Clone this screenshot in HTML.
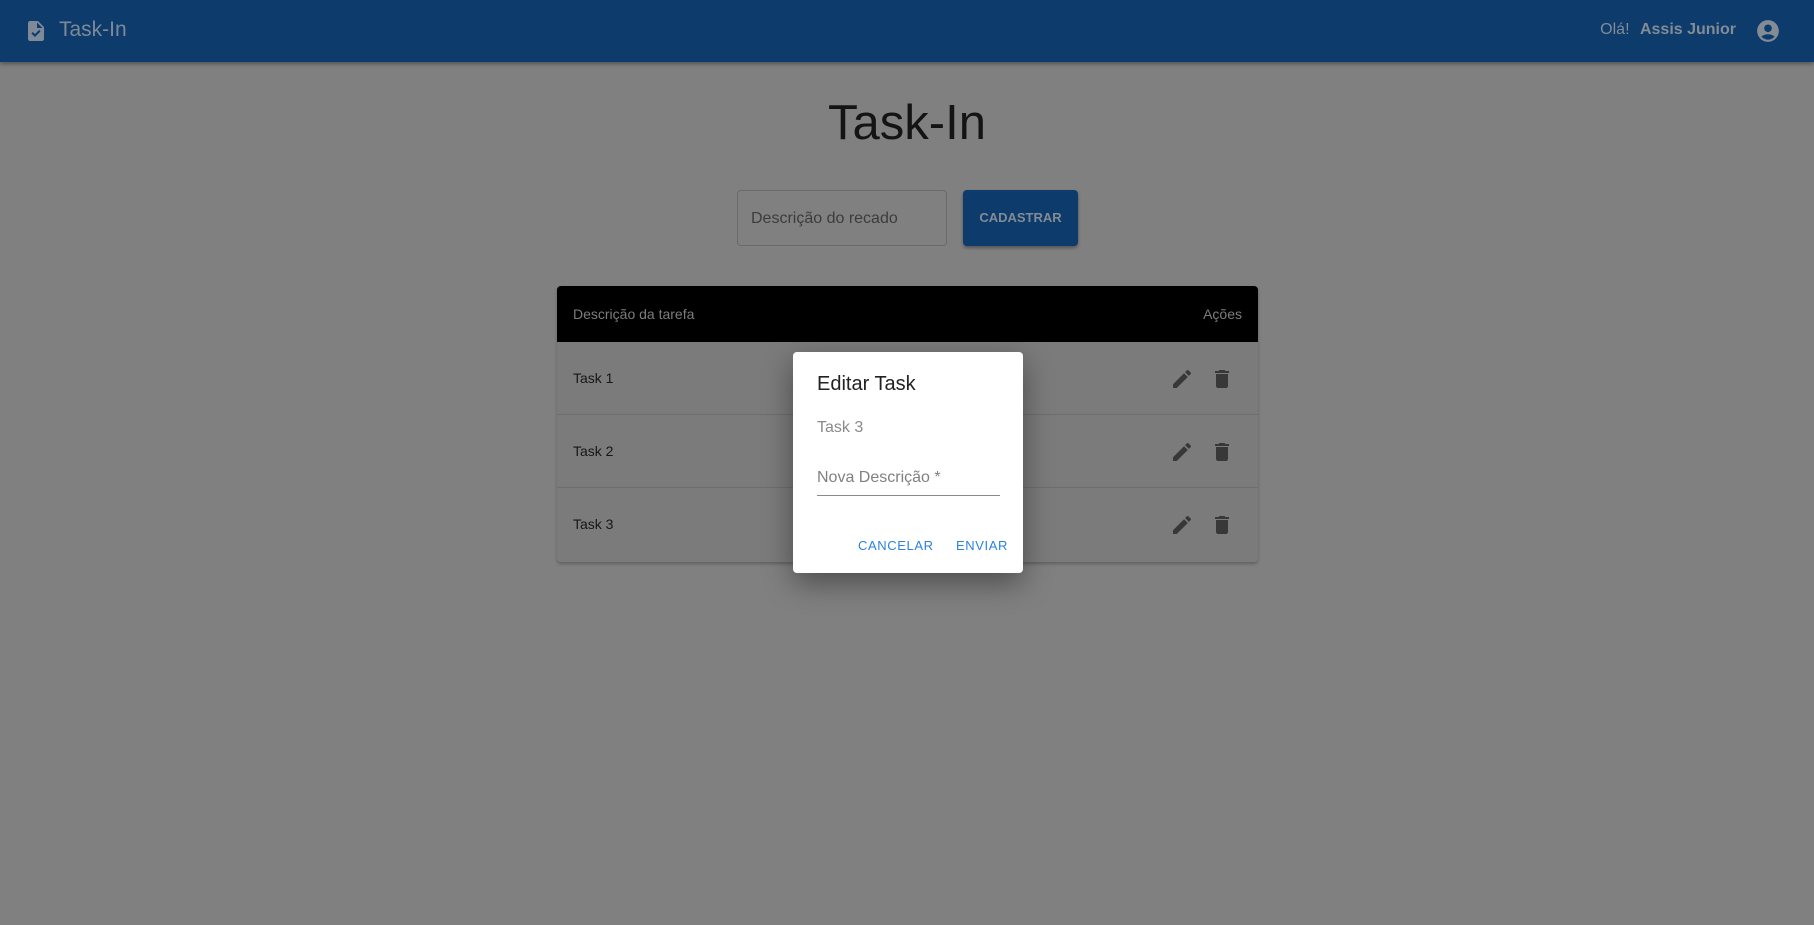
<!DOCTYPE html>
<html><head><meta charset="utf-8"><style>
*{box-sizing:border-box;margin:0;padding:0}
body{width:1814px;height:925px;background:#808080;font-family:"Liberation Sans",sans-serif;position:relative;overflow:hidden}
.bar{position:absolute;left:0;top:0;width:1814px;height:62px;background:#0c3b6c;box-shadow:0 2px 4px rgba(0,0,0,.35)}
.bar .t{position:absolute;left:59px;top:18px;font-size:21px;color:#7e8a97}
.bar .r{position:absolute;right:78px;top:21px;font-size:16px;color:#838b95}
.bar .r b{margin-left:6px}
h1{position:absolute;left:0;width:1814px;top:95px;text-align:center;font-weight:400;font-size:49px;color:#141414}
.inp{position:absolute;left:737px;top:190px;width:210px;height:56px;border:1px solid #6a6a6a;border-radius:4px;font-size:16px;color:#3c3c3c;padding:19px 0 0 13px}
.btn{position:absolute;left:963px;top:190px;width:115px;height:56px;background:#0c3b6c;border-radius:4px;color:#838b95;font-size:13px;font-weight:bold;text-align:center;line-height:56px;box-shadow:0 2px 3px rgba(0,0,0,.35)}
.tbl{position:absolute;left:557px;top:286px;width:701px;height:276px;background:#7b7b7b;border-radius:4px;box-shadow:0 2px 3px rgba(0,0,0,.25);overflow:hidden}
.th{height:56px;background:#000;color:#7c7c7c;font-size:14px;padding:20px 16px;display:flex;justify-content:space-between}
.row{height:73px;border-bottom:1px solid #6e6e6e;font-size:14px;color:#161616;padding:28px 16px;position:relative}
.row:last-child{border:none}
.ic{position:absolute;top:25px}
.dlg{position:absolute;left:793px;top:352px;width:230px;height:221px;background:#fff;border-radius:4px;box-shadow:0 10px 30px rgba(0,0,0,.4)}
.dlg .h{position:absolute;left:24px;top:21px;font-size:20px;color:#222}
.dlg .s{position:absolute;left:24px;top:67px;font-size:16px;color:#8a8a8a}
.dlg .f{position:absolute;left:24px;top:117px;width:183px;height:27px;border-bottom:1px solid #8a8a8a;font-size:16px;color:#808080}
.dlg .a{position:absolute;top:186px;font-size:13px;color:#2b82e0;letter-spacing:.6px}
</style></head><body>
<div class="bar">
<svg style="position:absolute;left:24px;top:19px" width="24" height="24" viewBox="0 0 24 24"><path fill="#7e8a97" d="M14 2H6c-1.1 0-2 .9-2 2v16c0 1.1.9 2 2 2h12c1.1 0 2-.9 2-2V8l-6-6zm-3.06 16L7.4 14.46l1.41-1.41 2.12 2.12 4.24-4.24 1.41 1.41L10.94 18zM13 9V3.5L18.5 9H13z"/></svg>
<div class="t">Task-In</div>
<div class="r">Olá! <b>Assis Junior</b></div>
<svg style="position:absolute;left:1755px;top:18px" width="26" height="26" viewBox="0 0 24 24"><path fill="#838b95" d="M12 2C6.48 2 2 6.48 2 12s4.48 10 10 10 10-4.48 10-10S17.52 2 12 2zm0 4c1.93 0 3.5 1.57 3.5 3.5S13.93 13 12 13s-3.5-1.57-3.5-3.5S10.07 6 12 6zm0 14c-2.03 0-4.43-.82-6.14-2.88C7.55 15.8 9.68 15 12 15s4.45.8 6.14 2.12C16.43 19.18 14.03 20 12 20z"/></svg>
</div>
<h1>Task-In</h1>
<div class="inp">Descrição do recado</div>
<div class="btn">CADASTRAR</div>
<div class="tbl">
<div class="th"><span>Descrição da tarefa</span><span>Ações</span></div>
<div class="row">Task 1
<svg class="ic" style="left:613px" width="24" height="24" viewBox="0 0 24 24"><path fill="#383838" d="M3 17.25V21h3.75L17.81 9.94l-3.75-3.75L3 17.25zM20.71 7.04a1 1 0 000-1.41l-2.34-2.34a1 1 0 00-1.41 0l-1.83 1.83 3.75 3.75 1.83-1.83z"/></svg>
<svg class="ic" style="left:653px" width="24" height="24" viewBox="0 0 24 24"><path fill="#383838" d="M6 19c0 1.1.9 2 2 2h8c1.1 0 2-.9 2-2V7H6v12zM19 4h-3.5l-1-1h-5l-1 1H5v2h14V4z"/></svg></div>
<div class="row">Task 2
<svg class="ic" style="left:613px" width="24" height="24" viewBox="0 0 24 24"><path fill="#383838" d="M3 17.25V21h3.75L17.81 9.94l-3.75-3.75L3 17.25zM20.71 7.04a1 1 0 000-1.41l-2.34-2.34a1 1 0 00-1.41 0l-1.83 1.83 3.75 3.75 1.83-1.83z"/></svg>
<svg class="ic" style="left:653px" width="24" height="24" viewBox="0 0 24 24"><path fill="#383838" d="M6 19c0 1.1.9 2 2 2h8c1.1 0 2-.9 2-2V7H6v12zM19 4h-3.5l-1-1h-5l-1 1H5v2h14V4z"/></svg></div>
<div class="row">Task 3
<svg class="ic" style="left:613px" width="24" height="24" viewBox="0 0 24 24"><path fill="#383838" d="M3 17.25V21h3.75L17.81 9.94l-3.75-3.75L3 17.25zM20.71 7.04a1 1 0 000-1.41l-2.34-2.34a1 1 0 00-1.41 0l-1.83 1.83 3.75 3.75 1.83-1.83z"/></svg>
<svg class="ic" style="left:653px" width="24" height="24" viewBox="0 0 24 24"><path fill="#383838" d="M6 19c0 1.1.9 2 2 2h8c1.1 0 2-.9 2-2V7H6v12zM19 4h-3.5l-1-1h-5l-1 1H5v2h14V4z"/></svg></div>
</div>
<div class="dlg">
<div class="h">Editar Task</div>
<div class="s">Task 3</div>
<div class="f">Nova Descrição *</div>
<div class="a" style="left:65px">CANCELAR</div>
<div class="a" style="left:163px">ENVIAR</div>
</div>
</body></html>
